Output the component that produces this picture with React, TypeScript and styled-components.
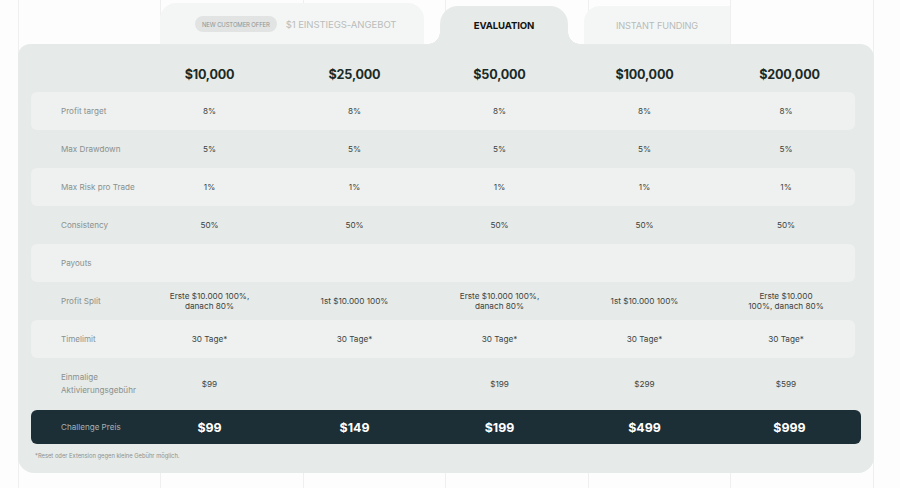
import React from "react";
import styled, { createGlobalStyle } from "styled-components";

const Global = createGlobalStyle`
  html, body { margin: 0; padding: 0; background: #fdfdfd; }
  * { box-sizing: border-box; }
  body { font-family: Inter, "Liberation Sans", Arial, sans-serif; }
`;

const CARD = "#e6eae8";
const LIGHT = "#eef1f0";
const TAB_IDLE = "#f4f6f5";

const Page = styled.div`
  width: 900px;
  height: 488px;
  overflow: hidden;
  background-color: #fdfdfd;
  background-image: repeating-linear-gradient(
    to right,
    #efefef 0 1px,
    transparent 1px 142.5px
  );
  background-position: 18px 0;
`;

const TabBar = styled.div`
  display: flex;
  align-items: flex-end;
  height: 44px;
  padding-left: 160px;
`;

const IdleTab = styled.div<{ $w: number; $top: number; $radius: string }>`
  width: ${(p) => p.$w}px;
  height: ${(p) => 44 - p.$top}px;
  background: ${TAB_IDLE};
  border-radius: ${(p) => p.$radius};
  display: flex;
  align-items: center;
  padding-top: ${(p) => (p.$top === 3 ? 1 : 0)}px;
`;

const OfferTab = styled(IdleTab)`
  padding-left: 35px;
  gap: 9px;
`;

const Badge = styled.span`
  display: inline-flex;
  align-items: center;
  height: 16px;
  padding: 0 7px;
  border-radius: 8px;
  background: #e1e4e3;
  color: #8f9493;
  font-size: 6px;
  letter-spacing: -0.15px;
  white-space: nowrap;
`;

const OfferText = styled.span`
  color: #b9bdbc;
  font-size: 9.6px;
  letter-spacing: -0.1px;
  white-space: nowrap;
`;

const ActiveTab = styled.div`
  position: relative;
  width: 128px;
  height: 38px;
  margin-left: 16px;
  margin-right: 16px;
  background: ${CARD};
  border-radius: 18px 18px 0 0;
  display: flex;
  align-items: center;
  justify-content: center;
  padding-bottom: 0;
  color: #111;
  font-weight: 700;
  font-size: 9.6px;
  letter-spacing: -0.15px;

  &::before,
  &::after {
    content: "";
    position: absolute;
    bottom: 0;
    width: 12px;
    height: 12px;
  }
  &::before {
    left: -12px;
    background: radial-gradient(circle at 0 0, transparent 11.5px, ${CARD} 12px);
  }
  &::after {
    right: -12px;
    background: radial-gradient(circle at 100% 0, transparent 11.5px, ${CARD} 12px);
  }
`;

const IdleLabel = styled.span`
  width: 100%;
  text-align: center;
  color: #b7bbba;
  font-size: 9.2px;
  letter-spacing: -0.15px;
`;

const Card = styled.div`
  margin-left: 18px;
  width: 856px;
  height: 429px;
  background: ${CARD};
  border-radius: 12px 14px 16px 16px;
  padding: 0 13px;
`;

const HeaderRow = styled.div`
  display: grid;
  grid-template-columns: 106px repeat(5, 145px);
  width: 830px;
  height: 48px;
  align-items: center;
  padding-top: 12px;
`;

const HeadCell = styled.div`
  text-align: center;
  color: #1b2a27;
  font-weight: 700;
  font-size: 12.6px;
  letter-spacing: -0.2px;
`;

const Row = styled.div<{ $light?: boolean; $h?: number }>`
  display: grid;
  grid-template-columns: 106px repeat(4, 145px) 1fr;
  width: 824px;
  height: ${(p) => p.$h ?? 38}px;
  align-items: center;
  background: ${(p) => (p.$light ? LIGHT : "transparent")};
  border-radius: 6px;
`;

const Label = styled.div`
  padding-left: 30px;
  color: #8a908e;
  font-size: 8.1px;
  line-height: 13px;
  white-space: nowrap;
`;

const Value = styled.div`
  text-align: center;
  color: #3b4341;
  font-size: 8.2px;
  line-height: 10px;
  white-space: nowrap;
`;

const PriceBar = styled.div`
  display: grid;
  grid-template-columns: 106px repeat(5, 145px);
  width: 830px;
  height: 34px;
  align-items: center;
  background: #1c2e36;
  border-radius: 6px;
`;

const PriceLabel = styled.div`
  padding-left: 30px;
  color: #a7b2b5;
  font-size: 8.1px;
  white-space: nowrap;
`;

const Price = styled.div`
  text-align: center;
  color: #ffffff;
  font-weight: 700;
  font-size: 12.4px;
`;

const Footnote = styled.div`
  padding: 8px 0 0 4px;
  color: #8d9290;
  font-size: 5.8px;
`;

const heads = ["$10,000", "$25,000", "$50,000", "$100,000", "$200,000"];

type RowDef = { label: React.ReactNode; values: React.ReactNode[]; h?: number };

const rows: RowDef[] = [
  { label: "Profit target", values: ["8%", "8%", "8%", "8%", "8%"] },
  { label: "Max Drawdown", values: ["5%", "5%", "5%", "5%", "5%"] },
  { label: "Max Risk pro Trade", values: ["1%", "1%", "1%", "1%", "1%"] },
  { label: "Consistency", values: ["50%", "50%", "50%", "50%", "50%"] },
  { label: "Payouts", values: ["", "", "", "", ""] },
  {
    label: "Profit Split",
    values: [
      <>Erste $10.000 100%,<br />danach 80%</>,
      "1st $10.000 100%",
      <>Erste $10.000 100%,<br />danach 80%</>,
      "1st $10.000 100%",
      <>Erste $10.000<br />100%, danach 80%</>,
    ],
  },
  { label: "Timelimit", values: ["30 Tage*", "30 Tage*", "30 Tage*", "30 Tage*", "30 Tage*"] },
  {
    label: <>Einmalige<br />Aktivierungsgebühr</>,
    values: ["$99", "", "$199", "$299", "$599"],
    h: 52,
  },
];

const prices = ["$99", "$149", "$199", "$499", "$999"];

export default function App() {
  return (
    <Page>
      <Global />
      <TabBar>
        <OfferTab $w={264} $top={3} $radius="16px 16px 0 0">
          <Badge>NEW CUSTOMER OFFER</Badge>
          <OfferText>$1 EINSTIEGS-ANGEBOT</OfferText>
        </OfferTab>
        <ActiveTab>EVALUATION</ActiveTab>
        <IdleTab $w={146} $top={6} $radius="16px 0 0 0">
          <IdleLabel>INSTANT FUNDING</IdleLabel>
        </IdleTab>
      </TabBar>
      <Card>
        <HeaderRow>
          <div />
          {heads.map((h) => (
            <HeadCell key={h}>{h}</HeadCell>
          ))}
        </HeaderRow>
        {rows.map((r, i) => (
          <Row key={i} $light={i % 2 === 0} $h={r.h}>
            <Label>{r.label}</Label>
            {r.values.map((v, j) => (
              <Value key={j}>{v}</Value>
            ))}
          </Row>
        ))}
        <PriceBar>
          <PriceLabel>Challenge Preis</PriceLabel>
          {prices.map((p) => (
            <Price key={p}>{p}</Price>
          ))}
        </PriceBar>
        <Footnote>*Reset oder Extension gegen kleine Gebühr möglich.</Footnote>
      </Card>
    </Page>
  );
}
